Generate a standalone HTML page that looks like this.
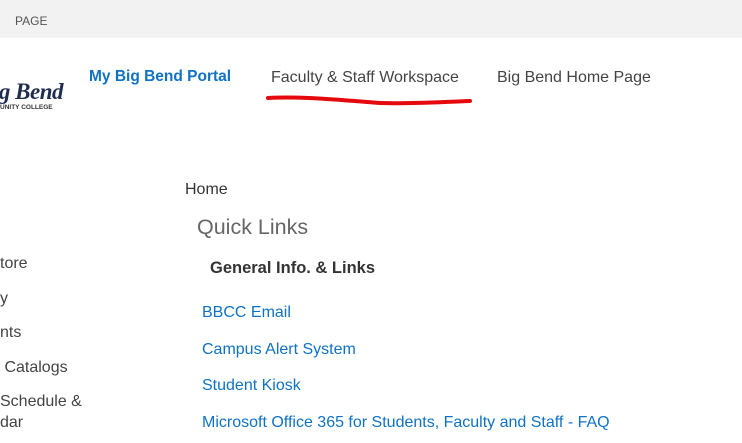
<!DOCTYPE html>
<html><head><style>
body{margin:0;width:742px;height:443px;overflow:hidden;background:#fff;font-family:"Liberation Sans",sans-serif;position:relative}
.t{position:absolute;white-space:nowrap}
.bar{position:absolute;left:0;top:0;width:742px;height:38px;background:#f2f2f2}
.l{color:#0f72c4;font-size:16px}
.g{color:#444;font-size:16px}
</style></head><body>
<div class="bar"></div>
<div class="t" style="left:15px;top:14px;font-size:12px;color:#555">PAGE</div>
<div class="t" style="left:-7px;top:79px;font-family:'Liberation Serif',serif;font-style:italic;font-weight:bold;font-size:23px;color:#1f2d4e;letter-spacing:-0.5px">ig Bend</div>
<div class="t" style="left:0;top:104px;font-size:6.5px;font-weight:bold;color:#333">UNITY COLLEGE</div>
<div class="t" style="left:89px;top:68px;font-size:15.5px;color:#0f72c4;font-weight:bold">My Big Bend Portal</div>
<div class="t g" style="left:271px;top:69px">Faculty &amp; Staff Workspace</div>
<div class="t g" style="left:497px;top:69px">Big Bend Home Page</div>
<svg class="t" style="left:0;top:0" width="742" height="443"><path d="M268 98 C300 96 340 100 380 103 C410 104 440 102 470 101" stroke="#e5080c" stroke-width="4" fill="none" stroke-linecap="round"/></svg>
<div class="t" style="left:185px;top:181px;font-size:16px;color:#333">Home</div>
<div class="t" style="left:197px;top:215px;font-size:21.5px;color:#666">Quick Links</div>
<div class="t" style="left:210px;top:259px;font-size:16.5px;color:#333;font-weight:bold">General Info. &amp; Links</div>
<div class="t l" style="left:202px;top:304px">BBCC Email</div>
<div class="t l" style="left:202px;top:341px">Campus Alert System</div>
<div class="t l" style="left:202px;top:377px">Student Kiosk</div>
<div class="t l" style="left:202px;top:414px">Microsoft Office 365 for Students, Faculty and Staff - FAQ</div>
<div class="t g" style="left:0;top:255px">tore</div>
<div class="t g" style="left:0;top:290px">y</div>
<div class="t g" style="left:0;top:324px">nts</div>
<div class="t g" style="left:0;top:359px">&nbsp;Catalogs</div>
<div class="t g" style="left:0;top:393px">Schedule &amp;</div>
<div class="t g" style="left:0;top:414px">dar</div>
</body></html>
